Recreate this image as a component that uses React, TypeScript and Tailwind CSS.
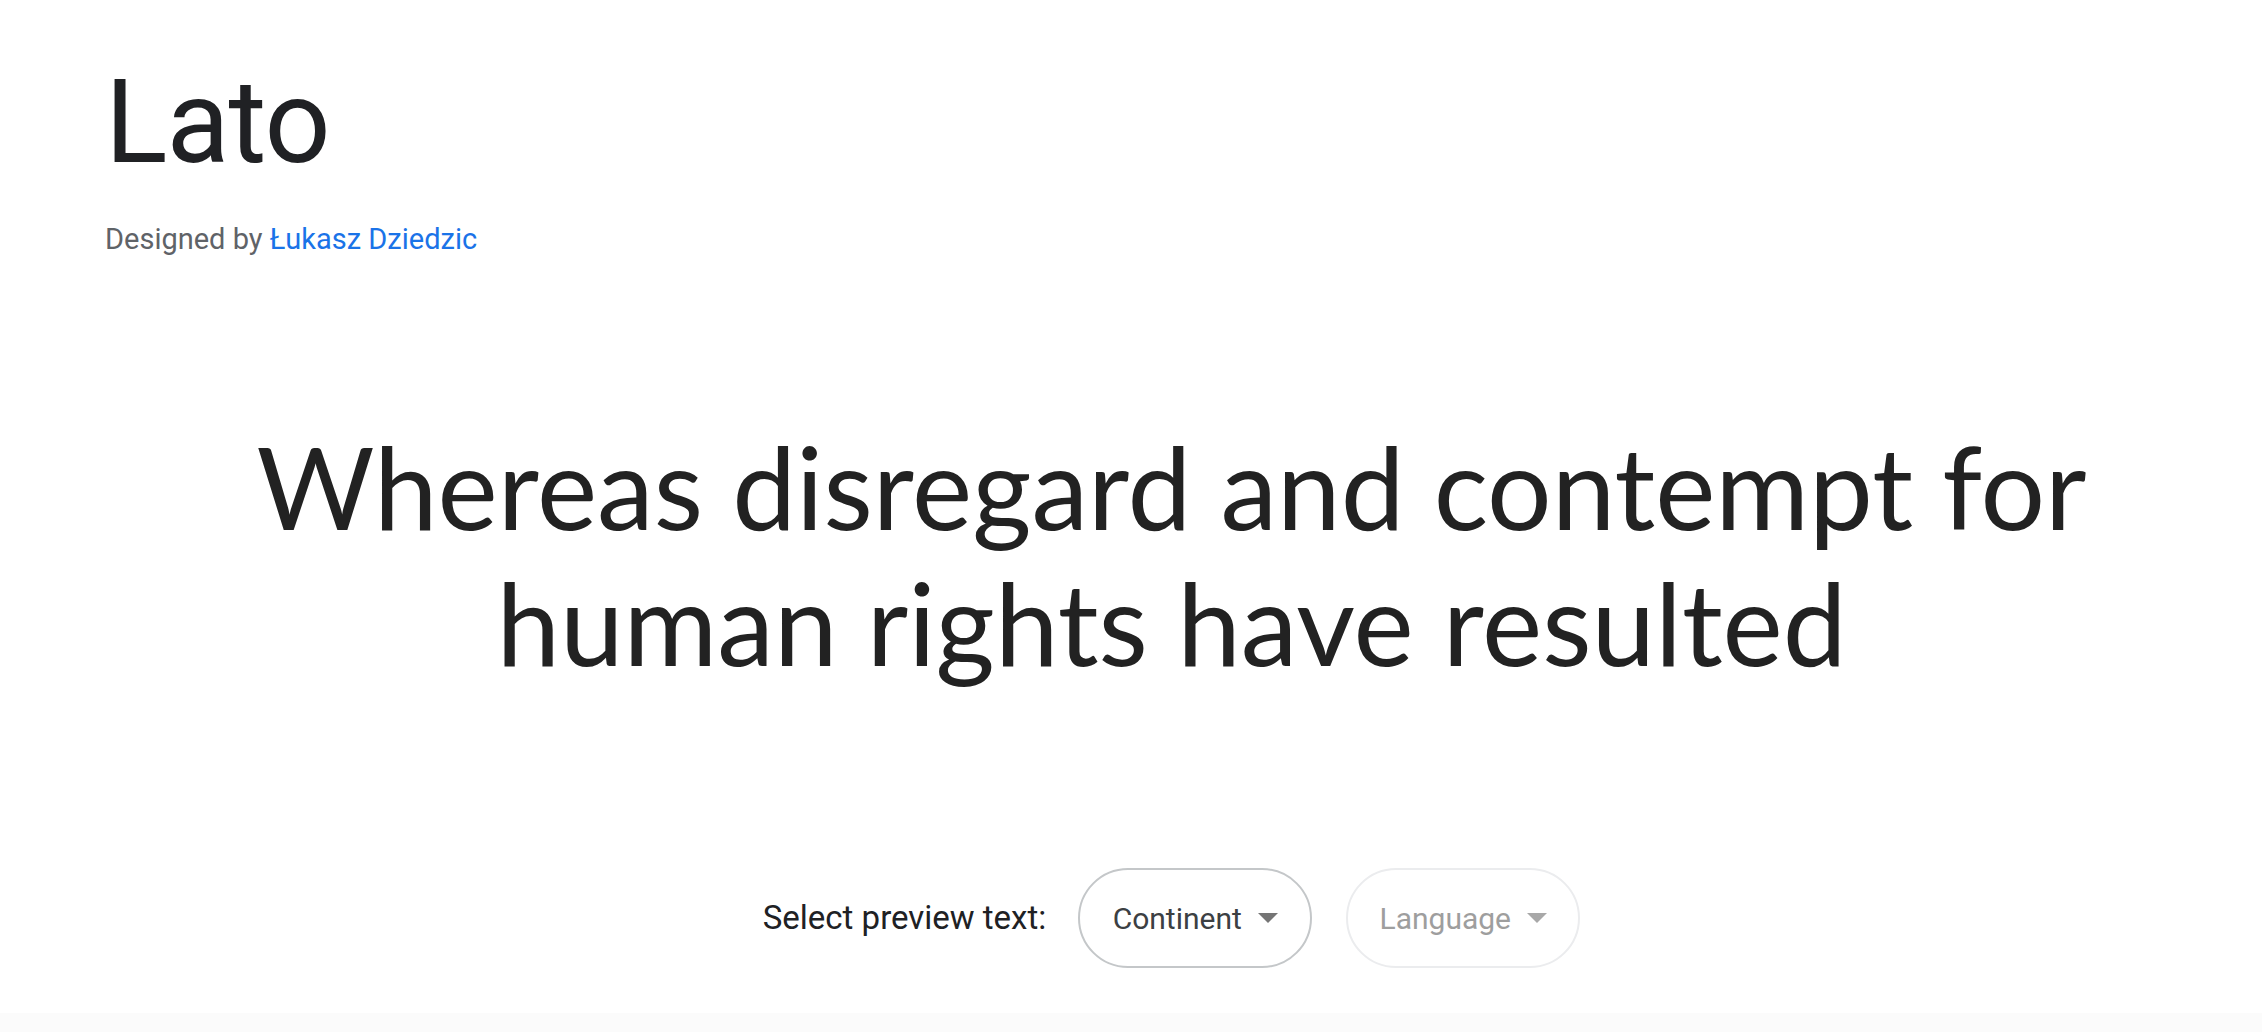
export default function App() {
  return (
    <div className="flex min-h-screen flex-col bg-white font-['Roboto',sans-serif] text-[#202124]">
      <header className="pl-[105px] pt-[64px]">
        <h1 className="text-[116px] font-normal leading-[116px] tracking-[-1px]">Lato</h1>
        <p className="mt-[40px] text-[29px] leading-[38px] text-[#5f6368]">
          Designed by <a className="text-[#1a73e8]">Łukasz Dziedzic</a>
        </p>
      </header>

      <main className="flex flex-col items-center pl-[105px] pr-[24px]">
        <p className="mt-[160px] text-center font-['Lato',sans-serif] text-[114px] leading-[136px] text-[#222222]">
          Whereas disregard and contempt for
          <br />
          human rights have resulted
        </p>

        <div className="mt-[178px] flex items-center gap-[32px]">
          <span className="text-[33px] text-[#202124]">Select preview text:</span>
          <div className="flex items-center gap-[34px]">
            <button className="flex h-[100px] w-[234px] items-center justify-center gap-[16px] rounded-full border-2 border-[#c4c7c9] bg-white text-[30px] text-[#3c4043]">
              Continent
              <svg width="20" height="10" viewBox="0 0 20 10">
                <path d="M0 0h20L10 10z" fill="#757575" />
              </svg>
            </button>
            <button className="flex h-[100px] w-[234px] items-center justify-center gap-[16px] rounded-full border-2 border-[#ebecee] bg-white text-[30px] text-[#9e9e9e]">
              Language
              <svg width="20" height="10" viewBox="0 0 20 10">
                <path d="M0 0h20L10 10z" fill="#a8a8a8" />
              </svg>
            </button>
          </div>
        </div>
      </main>

      <div className="mt-auto h-[19px] bg-[#fbfbfb]" />
    </div>
  );
}
